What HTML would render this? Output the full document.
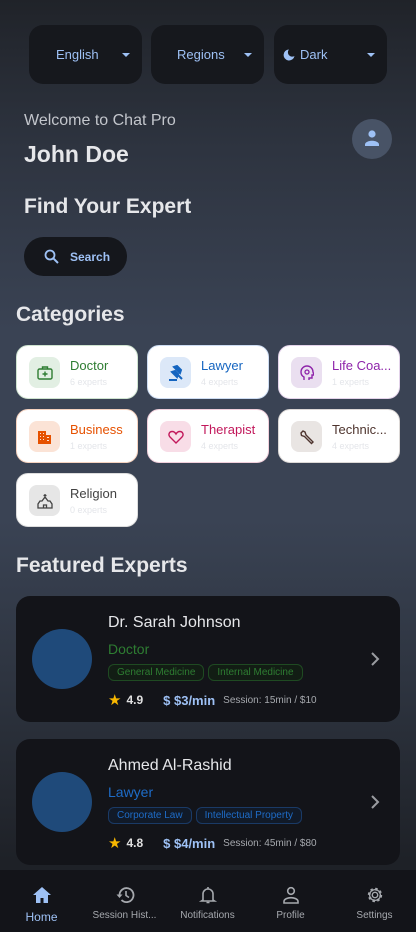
<!DOCTYPE html><html><head><style>
*{box-sizing:border-box;margin:0;padding:0}
body{width:416px;height:932px;overflow:hidden;font-family:"Liberation Sans",sans-serif;background:linear-gradient(#202329 0px,#2e3440 150px,#3a4354 330px,#3a4354 520px,#2c323d 700px,#1e2127 860px);position:relative;color:#e6e7ea}
.a{position:absolute}
.dd{position:absolute;top:25px;height:59px;width:113px;background:#16181d;border-radius:14px;color:#9ec1f5;font-size:13px;display:flex;align-items:center}
.car{position:absolute;right:12px;top:28px;border-left:4px solid transparent;border-right:4px solid transparent;border-top:4px solid #9ec1f5}
.cat{position:absolute;width:122px;height:54px;background:#fff;border-radius:12px;border:1.5px solid}
.cat .ib{position:absolute;left:12px;top:11px;width:31px;height:31px;border-radius:8px;display:flex;align-items:center;justify-content:center}
.cat .t{position:absolute;left:53px;top:12px;font-size:13px;white-space:nowrap}
.cat .s{position:absolute;left:53px;top:31px;font-size:9px;color:#e4e6ea}
.card{position:absolute;left:16px;width:384px;height:126px;background:#131419;border-radius:14px}
.av{position:absolute;left:16px;top:33px;width:60px;height:60px;border-radius:50%;background:#1f4a7a}
.nm{position:absolute;left:92px;top:18px;font-size:16px;color:#e6e7ea}
.cg{position:absolute;left:92px;top:45px;font-size:14px}
.tags{position:absolute;left:92px;top:68px;display:flex;gap:4px}
.tags span{font-size:10px;padding:2px 8px;border-radius:6px;border:1px solid}
.rt{position:absolute;left:92px;top:95px;font-size:12px;display:flex;align-items:center;white-space:nowrap}
.chev{position:absolute;right:20px;top:56px}
.nav{position:absolute;left:0;top:870px;width:416px;height:62px;background:#131419}
.ni{position:absolute;top:16px;width:83px;text-align:center;font-size:10px;color:#a6a9ae}
.ni svg{display:block;margin:0 auto 6px}
</style></head><body>
<div class="dd" style="left:29px"><span style="margin-left:27px">English</span><div class="car"></div></div>
<div class="dd" style="left:151px"><span style="margin-left:26px">Regions</span><div class="car"></div></div>
<div class="dd" style="left:274px"><svg style="margin-left:9px" width="12" height="12" viewBox="0 0 12 12"><path d="M6 0.5A5.5 5.5 0 1 0 11.5 7 4.3 4.3 0 0 1 6 0.5z" fill="#9ec1f5"/></svg><span style="margin-left:5px">Dark</span><div class="car"></div></div>
<div class="a" style="left:24px;top:112px;font-size:16px;color:#c3c6cc">Welcome to Chat Pro</div>
<div class="a" style="left:24px;top:141px;font-size:23px;font-weight:bold;color:#e6e7ea">John Doe</div>
<div class="a" style="left:352px;top:119px;width:40px;height:40px;border-radius:50%;background:#485366"><svg class="a" style="left:11px;top:10px" width="18" height="18" viewBox="0 0 18 18"><circle cx="9" cy="5" r="3.6" fill="#9ec1f5"/><path d="M2 17v-1.5c0-2.5 4-3.8 7-3.8s7 1.3 7 3.8V17z" fill="#9ec1f5"/></svg></div>
<div class="a" style="left:24px;top:195px;font-size:21px;font-weight:bold">Find Your Expert</div>
<div class="a" style="left:24px;top:237px;width:103px;height:39px;border-radius:20px;background:#15171c;color:#9ec1f5;font-size:12px;font-weight:bold"><svg class="a" style="left:20px;top:12px" width="15" height="15" viewBox="0 0 15 15"><circle cx="6" cy="6" r="4.5" fill="none" stroke="#9ec1f5" stroke-width="1.8"/><path d="M9.3 9.3L14 14" stroke="#9ec1f5" stroke-width="2"/></svg><span class="a" style="left:46px;top:13px">Search</span></div>
<div class="a" style="left:16px;top:303px;font-size:21px;font-weight:bold">Categories</div>

<div class="cat" style="left:16px;top:345px;border-color:#cfe3d0"><div class="ib" style="background:#e2efe3"><svg width="16" height="14" viewBox="0 0 16 14"><rect x="1" y="3" width="14" height="10" rx="1.5" fill="none" stroke="#2e7d32" stroke-width="1.4"/><path d="M5.5 3V1h5v2M8 5.5v5M5.5 8h5" stroke="#2e7d32" stroke-width="1.4" fill="none"/></svg></div><div class="t" style="color:#2e7d32">Doctor</div><div class="s">6 experts</div></div>
<div class="cat" style="left:147px;top:345px;border-color:#cddcf2"><div class="ib" style="background:#dce8f8"><svg width="16" height="16" viewBox="0 0 16 16"><path d="M6 2l3-1 4 4-1 3zM4 7l3-1 3 3-1 3zM8 8l6 6M1 15h8" stroke="#1565c0" stroke-width="2" fill="#1565c0"/></svg></div><div class="t" style="color:#1565c0">Lawyer</div><div class="s">4 experts</div></div>
<div class="cat" style="left:278px;top:345px;border-color:#e3d3ea"><div class="ib" style="background:#eadff0"><svg width="14" height="16" viewBox="0 0 14 16"><path d="M4 15v-3C2 11 1 9 1 7a6 6 0 0 1 12 0l1 3h-2v3H9v2" fill="none" stroke="#8e24aa" stroke-width="1.4"/><circle cx="7" cy="7" r="2" fill="none" stroke="#8e24aa" stroke-width="1.3"/></svg></div><div class="t" style="color:#8e24aa">Life Coa...</div><div class="s">1 experts</div></div>

<div class="cat" style="left:16px;top:409px;border-color:#f5d2bf"><div class="ib" style="background:#fbe3d6"><svg width="15" height="14" viewBox="0 0 15 14"><path d="M1 1h8v4h5v9H1z" fill="#e65100"/><path d="M3 3h1v1H3zM6 3h1v1H6zM3 6h1v1H3zM6 6h1v1H6zM3 9h1v1H3zM6 9h1v1H6zM10 7h2v1h-2zM10 10h2v1h-2z" fill="#fbe3d6"/></svg></div><div class="t" style="color:#e65100">Business</div><div class="s">1 experts</div></div>
<div class="cat" style="left:147px;top:409px;border-color:#f0cfdb"><div class="ib" style="background:#f8dde7"><svg width="16" height="14" viewBox="0 0 16 14"><path d="M8 13L2 7C0 5 1 1.5 4.2 1.5 6 1.5 7.3 2.8 8 4c.7-1.2 2-2.5 3.8-2.5C15 1.5 16 5 14 7z" fill="none" stroke="#c2185b" stroke-width="1.4"/></svg></div><div class="t" style="color:#c2185b">Therapist</div><div class="s">4 experts</div></div>
<div class="cat" style="left:278px;top:409px;border-color:#dcd8d6"><div class="ib" style="background:#e9e5e3"><svg width="16" height="16" viewBox="0 0 16 16"><path d="M2 4l2-2 2 1 1 3 7 7-1.5 1.5-7-7-3-1z" fill="none" stroke="#4e342e" stroke-width="1.4"/></svg></div><div class="t" style="color:#4e342e">Technic...</div><div class="s">4 experts</div></div>

<div class="cat" style="left:16px;top:473px;border-color:#dddddd"><div class="ib" style="background:#e6e6e6"><svg width="16" height="16" viewBox="0 0 16 16"><path d="M8 1v3M6.5 2.5h3M8 4l-3 4H3l-2 3v4h14v-4l-2-3h-2zM6.5 15v-3h3v3" fill="none" stroke="#424242" stroke-width="1.3"/></svg></div><div class="t" style="color:#424242">Religion</div><div class="s">0 experts</div></div>

<div class="a" style="left:16px;top:554px;font-size:21px;font-weight:bold">Featured Experts</div>

<div class="card" style="top:596px"><div class="av"></div><div class="nm">Dr. Sarah Johnson</div><div class="cg" style="color:#2e7d32">Doctor</div>
<div class="tags"><span style="color:#2e7d32;border-color:#1f4a22;background:#121d14">General Medicine</span><span style="color:#2e7d32;border-color:#1f4a22;background:#121d14">Internal Medicine</span></div>
<div class="rt"><span style="color:#f9b800;font-size:15px">★</span><span style="margin-left:5px;color:#e0e0e0;font-weight:bold">4.9</span><span style="margin-left:20px;color:#9ec1f5;font-weight:bold;font-size:13px">$ $3/min</span><span style="margin-left:8px;color:#a6a9ae;font-size:10px">Session: 15min / $10</span></div>
<svg class="chev" width="10" height="14" viewBox="0 0 10 14"><path d="M2 1l6 6-6 6" fill="none" stroke="#9a9ca1" stroke-width="2"/></svg></div>

<div class="card" style="top:739px"><div class="av"></div><div class="nm">Ahmed Al-Rashid</div><div class="cg" style="color:#1e6cc8">Lawyer</div>
<div class="tags"><span style="color:#1e6cc8;border-color:#1a3a66;background:#111a28">Corporate Law</span><span style="color:#1e6cc8;border-color:#1a3a66;background:#111a28">Intellectual Property</span></div>
<div class="rt"><span style="color:#f9b800;font-size:15px">★</span><span style="margin-left:5px;color:#e0e0e0;font-weight:bold">4.8</span><span style="margin-left:20px;color:#9ec1f5;font-weight:bold;font-size:13px">$ $4/min</span><span style="margin-left:8px;color:#a6a9ae;font-size:10px">Session: 45min / $80</span></div>
<svg class="chev" width="10" height="14" viewBox="0 0 10 14"><path d="M2 1l6 6-6 6" fill="none" stroke="#9a9ca1" stroke-width="2"/></svg></div>

<div class="nav">
<div class="ni" style="left:0;color:#9ec1f5;font-size:12px"><svg width="20" height="18" viewBox="0 0 20 18"><path d="M10 1L1 9h3v8h4.5v-5h3v5H16V9h3z" fill="#9ec1f5"/></svg>Home</div>
<div class="ni" style="left:83px"><svg width="20" height="18" viewBox="0 0 20 18"><path d="M4.5 9a7 7 0 1 1 2 5" fill="none" stroke="#a6a9ae" stroke-width="1.8"/><path d="M1.5 8.5h6L4.5 12z" fill="#a6a9ae"/><path d="M11 5v4.5l3 2" fill="none" stroke="#a6a9ae" stroke-width="1.6"/></svg>Session Hist...</div>
<div class="ni" style="left:166px"><svg width="20" height="18" viewBox="0 0 20 18"><path d="M5 14V8a5 5 0 0 1 10 0v6l1.5 1H3.5z" fill="none" stroke="#a6a9ae" stroke-width="1.6"/><path d="M8.5 16.5h3M10 1v2" stroke="#a6a9ae" stroke-width="1.6"/></svg>Notifications</div>
<div class="ni" style="left:249px"><svg width="20" height="18" viewBox="0 0 20 18"><circle cx="10" cy="5" r="3.3" fill="none" stroke="#a6a9ae" stroke-width="1.6"/><path d="M3 17v-1.5c0-2.5 4-3.8 7-3.8s7 1.3 7 3.8V17z" fill="none" stroke="#a6a9ae" stroke-width="1.6"/></svg>Profile</div>
<div class="ni" style="left:333px"><svg width="20" height="18" viewBox="0 0 20 20"><circle cx="10" cy="10" r="3" fill="none" stroke="#a6a9ae" stroke-width="1.6"/><circle cx="10" cy="10" r="6.5" fill="none" stroke="#a6a9ae" stroke-width="3" stroke-dasharray="2.6 2.5"/><circle cx="10" cy="10" r="6" fill="none" stroke="#a6a9ae" stroke-width="1.4"/></svg>Settings</div>
</div>
</body></html>
